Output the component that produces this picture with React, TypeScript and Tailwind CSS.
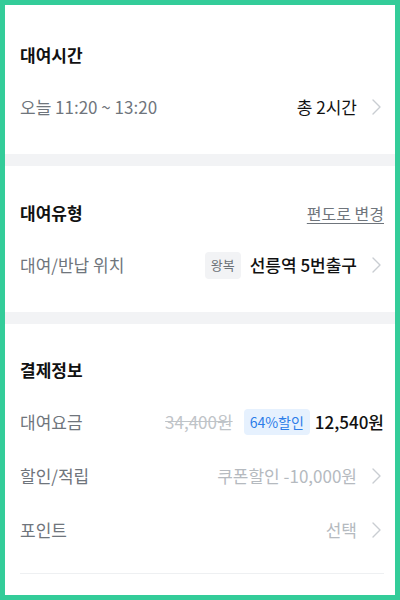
import React from 'react';

const Chevron = () => (
    <svg width="12" height="16" viewBox="0 0 12 16" fill="none" className="ml-[15px] shrink-0">
        <polyline points="1,1 8,8 1,15" stroke="#c9cdd2" strokeWidth="1.4" strokeLinecap="round" strokeLinejoin="round" />
    </svg>
);

function Row({ label, children }: { label: string; children: React.ReactNode }) {
    return (
        <div className="h-[54px] flex items-center justify-between">
            <span className="text-[17px] text-[#6f757c]">{label}</span>
            <div className="flex items-center">{children}</div>
        </div>
    );
}

export default function App() {
    return (
        <div
            className="w-[400px] h-[600px] border-[5px] border-[#33cc99] bg-white overflow-hidden flex flex-col"
            style={{ fontFamily: '"Noto Sans CJK KR", "Noto Sans", sans-serif' }}
        >
            {/* 대여시간 */}
            <section className="pt-[25px] pb-[20px] pl-[15px] pr-[11px]">
                <div className="h-[50px] flex items-center">
                    <h2 className="text-[17px] font-bold text-[#111111]">대여시간</h2>
                </div>
                <Row label="오늘 11:20 ~ 13:20">
                    <span className="text-[17px] text-[#111111]">총 2시간</span>
                    <Chevron />
                </Row>
            </section>

            <div className="h-[12px] bg-[#f2f3f5] shrink-0" />

            {/* 대여유형 */}
            <section className="pt-[22px] pb-[20px] pl-[15px] pr-[11px]">
                <div className="h-[50px] flex items-center justify-between">
                    <h2 className="text-[17px] font-bold text-[#111111]">대여유형</h2>
                    <span className="text-[16px] text-[#6f757c] underline underline-offset-[3px]">편도로 변경</span>
                </div>
                <Row label="대여/반납 위치">
                    <span className="h-[27px] px-[6px] rounded-[4px] bg-[#f2f3f5] text-[13px] text-[#6b7177] flex items-center">왕복</span>
                    <span className="ml-[9px] text-[17px] font-medium text-[#111111]">선릉역 5번출구</span>
                    <Chevron />
                </Row>
            </section>

            <div className="h-[12px] bg-[#f2f3f5] shrink-0" />

            {/* 결제정보 */}
            <section className="pt-[21px] pl-[15px] pr-[11px]">
                <div className="h-[50px] flex items-center">
                    <h2 className="text-[17px] font-bold text-[#111111]">결제정보</h2>
                </div>
                <Row label="대여요금">
                    <span className="text-[17px] text-[#bfc4c8] line-through">34,400원</span>
                    <span className="ml-[11px] h-[26px] px-[6px] rounded-[4px] bg-[#e6f1fe] text-[14px] text-[#2b7de9] flex items-center">64%할인</span>
                    <span className="ml-[5px] text-[17px] font-medium text-[#111111]">12,540원</span>
                </Row>
                <Row label="할인/적립">
                    <span className="text-[17px] text-[#b5babf]">쿠폰할인 -10,000원</span>
                    <Chevron />
                </Row>
                <Row label="포인트">
                    <span className="text-[17px] text-[#b5babf]">선택</span>
                    <Chevron />
                </Row>
                <div className="mt-[16px] h-px bg-[#eef0f2]" />
            </section>
        </div>
    );
}
